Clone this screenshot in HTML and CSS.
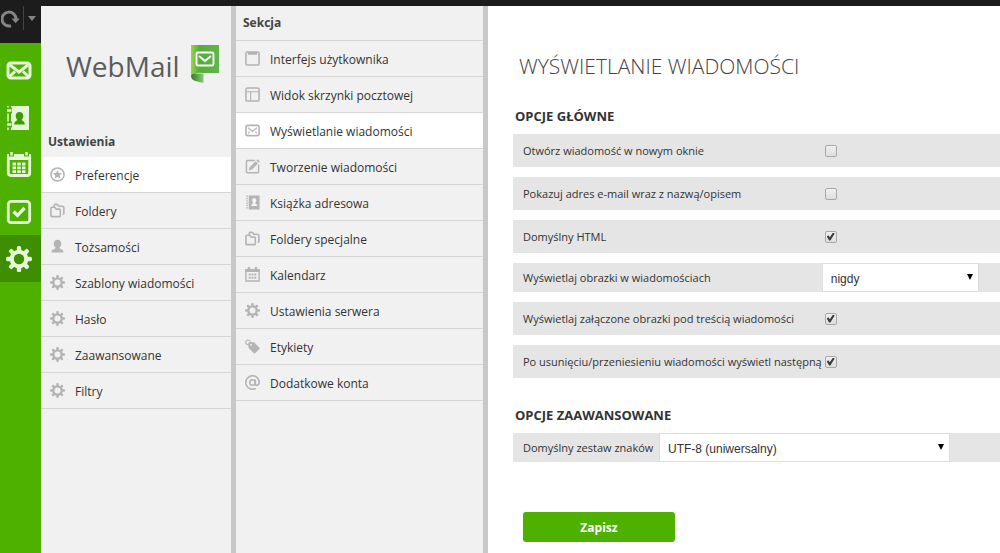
FILE: index.html
```html
<!DOCTYPE html>
<html lang="pl">
<head>
    <meta charset="UTF-8">
    <title>WebMail - Ustawienia</title>
    <link rel="stylesheet" href="styles.css">
</head>
<body>

    <!-- Ikony -->
    <svg class="sprite" aria-hidden="true">
        <symbol id="i-gear" viewBox="0 0 24 24">
            <g fill="currentColor">
                <rect id="tooth" x="10" y="0" width="4" height="24" rx="1.5"/>
                <use href="#tooth" transform="rotate(45 12 12)"/>
                <use href="#tooth" transform="rotate(90 12 12)"/>
                <use href="#tooth" transform="rotate(135 12 12)"/>
                <circle cx="12" cy="12" r="8.6"/>
            </g>
            <circle class="hole" cx="12" cy="12" r="4.8"/>
        </symbol>
        <symbol id="i-star" viewBox="0 0 16 16">
            <circle cx="8" cy="8" r="7" fill="none" stroke="currentColor" stroke-width="1.6"/>
            <path fill="currentColor" d="M8 3.200l1.500 3.200 3.300.3-2.500 2.300.8 3.300L8 10.600 4.900 12.300l.8-3.300L3.200 6.700l3.300-.3z"/>
        </symbol>
        <symbol id="i-folders" viewBox="0 0 16 16">
            <g fill="none" stroke="currentColor" stroke-width="1.700" stroke-linejoin="round">
                <path d="M1 5.500q0-1 1-1h3l1.500 2H10q1 0 1 1V13.500q0 1-1 1H2q-1 0-1-1z"/>
                <path d="M4.500 4.500V3q0-1.500 1-1.500h2.500l1.500 2H13q1.800 0 1.800 1.500v6q0 1.300-1.300 1.300"/>
            </g>
        </symbol>
        <symbol id="i-person" viewBox="0 0 16 16">
            <path fill="currentColor" d="M8 .8c2.600 0 4 1.800 4 4.200 0 1.800-.8 3.200-1.900 4.100 0 1.600.9 1.500 2.700 2.200 1.200.5 1.500 1.500 1.500 3.200H1.700c0-1.700.3-2.700 1.500-3.200 1.800-.7 2.700-.6 2.700-2.200C4.800 8.200 4 6.800 4 5 4 2.600 5.400.8 8 .8z"/>
        </symbol>
        <symbol id="i-window" viewBox="0 0 16 16">
            <rect x="1" y="1" width="14" height="14" rx="1.500" fill="none" stroke="currentColor" stroke-width="1.700"/>
            <path fill="currentColor" d="M3 1h10v3H3z"/>
        </symbol>
        <symbol id="i-layout" viewBox="0 0 16 16">
            <rect x="1" y="1" width="14" height="14" rx="1.500" fill="none" stroke="currentColor" stroke-width="1.700"/>
            <path d="M1 5h14M6 5v10" stroke="currentColor" stroke-width="1.200"/>
        </symbol>
        <symbol id="i-mail" viewBox="0 0 16 16">
            <rect x="1" y="2.500" width="14" height="11" rx="2" fill="none" stroke="currentColor" stroke-width="1.700"/>
            <path d="M3.300 5L8 9l4.700-4M3.300 11l1.700-1.700M12.700 11L11 9.300" fill="none" stroke="currentColor" stroke-width="1.300"/>
        </symbol>
        <symbol id="i-edit" viewBox="0 0 16 16">
            <path d="M10.500 1.700H2.500q-1 0-1 1v11q0 1 1 1h11q1 0 1-1V6" fill="none" stroke="currentColor" stroke-width="1.600"/>
            <path fill="currentColor" d="M4 12.200l.9-3.400 6.400-6.400 2.500 2.500-6.400 6.400zM12.100 1.600L13.500.2 16 2.700l-1.400 1.400z"/>
        </symbol>
        <symbol id="i-book" viewBox="0 0 16 16">
            <path fill="currentColor" d="M4 .5h11.500v15H4z"/>
            <path d="M2.200.5v15" stroke="currentColor" stroke-width="1.500" stroke-dasharray="1.500 1"/>
            <path class="hole" d="M9.800 3.200c1.500 0 2.300 1 2.300 2.500 0 1.200-.5 2-1.100 2.600 0 1.600 2 .8 2 3.500H6.600c0-2.700 2-1.900 2-3.500-.6-.6-1.100-1.400-1.100-2.600 0-1.500.8-2.500 2.300-2.500z"/>
        </symbol>
        <symbol id="i-calendar" viewBox="0 0 16 16">
            <path fill="none" stroke="currentColor" stroke-width="1.500" d="M1 3h14v12H1z"/>
            <path fill="currentColor" d="M.5 2h15v3.200H.5zM3 0h2.500v3H3zM10.500 0H13v3h-2.500z"/>
            <path d="M4 8h8M4 11.500h8" stroke="currentColor" stroke-width="2.200" stroke-dasharray="2 1"/>
        </symbol>
        <symbol id="i-tag" viewBox="0 0 16 16">
            <path fill="currentColor" d="M3.500 4.500l1-1.300 5.300.3 6.200 6.700-5.800 5.500-6.400-6.200z"/>
            <path d="M5.500 5.500C3.500 7 .5 6 .7 3.200 1 .7 4.500.2 6 2.500" fill="none" stroke="currentColor" stroke-width="1.200"/>
            <circle class="hole" cx="6.500" cy="6.200" r="1"/>
        </symbol>
        <symbol id="i-at" viewBox="0 0 16 16">
            <g fill="none" stroke="currentColor" stroke-width="1.700">
                <circle cx="8" cy="8" r="2.900"/>
                <path d="M11 5v4.500q0 1.700 1.700 1.500Q15.200 10.500 15.200 8A7.200 7.200 0 1 0 11.500 14.300"/>
            </g>
        </symbol>
    </svg>

    <div class="topbar"></div>

    <div class="app">
        <nav class="rail" aria-label="Moduły">
            <div class="refresh">
                <button type="button" aria-label="Odśwież">
                    <svg width="19" height="18" viewBox="0 0 19 18"><path d="M10 15.800A7 7 0 1 1 15 9" fill="none" stroke="currentColor" stroke-width="3"/><path d="M10.500 8.500h8.300l-4.200 4.800z" fill="currentColor"/></svg>
                </button>
                <button type="button" class="more" aria-label="Więcej"><span class="caret"></span></button>
            </div>
            <a class="rail-link" href="#poczta" aria-label="Poczta">
                <svg width="26" height="20" viewBox="0 0 26 20"><rect x="2" y="2" width="22" height="15" rx="3" fill="none" stroke="currentColor" stroke-width="3"/><path d="M4 4l9 7 9-7M3.500 15.500l5.500-5M22.500 15.500l-5.500-5" fill="none" stroke="currentColor" stroke-width="3"/></svg>
            </a>
            <a class="rail-link" href="#kontakty" aria-label="Kontakty">
                <svg width="24" height="26" viewBox="0 0 24 26"><path d="M5 1h18v24H5z" fill="currentColor"/><path d="M2 1v24" stroke="currentColor" stroke-width="1.500"/><path d="M1 5.500h5M1 19.500h5" stroke="#4eb100" stroke-width="6"/><path d="M1 5.500h4.500M1 19.500h4.500" stroke="currentColor" stroke-width="2.500"/><path d="M13.500 7c2.600 0 3.800 1.700 3.800 4 0 1.500-.6 2.800-1.500 3.600 0 2 3 1 3 4.900H8.200c0-3.900 3-2.900 3-4.900-.9-.8-1.500-2.100-1.500-3.600 0-2.300 1.200-4 3.800-4z" fill="#3f9a00"/></svg>
            </a>
            <a class="rail-link" href="#kalendarz" aria-label="Kalendarz">
                <svg width="26" height="26" viewBox="0 0 26 26"><path d="M2.300 6h21.400v15q0 2.500-2.500 2.500H4.800q-2.500 0-2.500-2.500z" fill="none" stroke="currentColor" stroke-width="2.800"/><path d="M1 2h24v6H1z" fill="currentColor"/><path d="M5.500 0v4.500M20.500 0v4.500" stroke="#4eb100" stroke-width="5"/><path d="M5.500 0v3.500M20.500 0v3.500" stroke="currentColor" stroke-width="2.500"/><path d="M6.500 12h13M6.500 15.800h13M6.500 19.600h13" stroke="currentColor" stroke-width="2.800" stroke-dasharray="3.500 1.250"/></svg>
            </a>
            <a class="rail-link" href="#zadania" aria-label="Zadania">
                <svg width="26" height="26" viewBox="0 0 26 26"><rect x="2.300" y="2.300" width="21.400" height="21.400" rx="3" fill="none" stroke="currentColor" stroke-width="2.800"/><path d="M7.500 12.500l4 4 7-7.500" fill="none" stroke="currentColor" stroke-width="3.300"/></svg>
            </a>
            <a class="rail-link active" href="#ustawienia" aria-label="Ustawienia">
                <svg width="26" height="26"><use href="#i-gear"/></svg>
            </a>
        </nav>

        <aside class="panel settings">
            <div class="logo">
                <span>WebMail</span>
                <svg width="30" height="40" viewBox="0 0 30 40">
                    <defs>
                        <linearGradient id="g1"><stop offset="0" stop-color="#9ad44c"/><stop offset=".3" stop-color="#55ac3b"/><stop offset="1" stop-color="#61b649"/></linearGradient>
                        <linearGradient id="g2"><stop offset="0" stop-color="#2b7a2c"/><stop offset="1" stop-color="#8dcb70"/></linearGradient>
                    </defs>
                    <path d="M1 1h28v28H12q-6-1-11 3z" fill="url(#g1)"/>
                    <path d="M1 32.500q0-3 5-3h7.500V39Q1 37 1 32.500z" fill="url(#g2)"/>
                    <rect x="6.500" y="8.500" width="17" height="13" rx="1.500" fill="none" stroke="#fff" stroke-width="1.800"/>
                    <path d="M9 12l6 5 6-5" fill="none" stroke="#fff" stroke-width="1.800"/>
                </svg>
            </div>
            <h2>Ustawienia</h2>
            <ul>
                <li class="active"><a href="#preferencje"><svg><use href="#i-star"/></svg>Preferencje</a></li>
                <li><a href="#foldery"><svg><use href="#i-folders"/></svg>Foldery</a></li>
                <li><a href="#tozsamosci"><svg><use href="#i-person"/></svg>Tożsamości</a></li>
                <li><a href="#szablony"><svg><use href="#i-gear"/></svg>Szablony wiadomości</a></li>
                <li><a href="#haslo"><svg><use href="#i-gear"/></svg>Hasło</a></li>
                <li><a href="#zaawansowane"><svg><use href="#i-gear"/></svg>Zaawansowane</a></li>
                <li><a href="#filtry"><svg><use href="#i-gear"/></svg>Filtry</a></li>
            </ul>
        </aside>

        <aside class="panel sections">
            <h2>Sekcja</h2>
            <ul>
                <li><a href="#interfejs"><svg><use href="#i-window"/></svg>Interfejs użytkownika</a></li>
                <li><a href="#widok"><svg><use href="#i-layout"/></svg>Widok skrzynki pocztowej</a></li>
                <li class="active"><a href="#wyswietlanie"><svg><use href="#i-mail"/></svg>Wyświetlanie wiadomości</a></li>
                <li><a href="#tworzenie"><svg><use href="#i-edit"/></svg>Tworzenie wiadomości</a></li>
                <li><a href="#ksiazka"><svg><use href="#i-book"/></svg>Książka adresowa</a></li>
                <li><a href="#specjalne"><svg><use href="#i-folders"/></svg>Foldery specjalne</a></li>
                <li><a href="#kal"><svg><use href="#i-calendar"/></svg>Kalendarz</a></li>
                <li><a href="#serwer"><svg><use href="#i-gear"/></svg>Ustawienia serwera</a></li>
                <li><a href="#etykiety"><svg><use href="#i-tag"/></svg>Etykiety</a></li>
                <li><a href="#konta"><svg><use href="#i-at"/></svg>Dodatkowe konta</a></li>
            </ul>
        </aside>

        <main>
            <h1>WYŚWIETLANIE WIADOMOŚCI</h1>
            <form>
                <h3>OPCJE GŁÓWNE</h3>
                <table>
                    <tr>
                        <td class="name"><label for="nowe-okno">Otwórz wiadomość w nowym oknie</label></td>
                        <td><input type="checkbox" id="nowe-okno"></td>
                    </tr>
                    <tr>
                        <td class="name"><label for="adres">Pokazuj adres e-mail wraz z nazwą/opisem</label></td>
                        <td><input type="checkbox" id="adres"></td>
                    </tr>
                    <tr>
                        <td class="name"><label for="html">Domyślny HTML</label></td>
                        <td><input type="checkbox" id="html" checked></td>
                    </tr>
                    <tr class="with-select">
                        <td class="name"><label for="obrazki">Wyświetlaj obrazki w wiadomościach</label></td>
                        <td>
                            <div class="select short">
                                <select id="obrazki">
                                    <option>nigdy</option>
                                    <option>zawsze</option>
                                </select>
                            </div>
                        </td>
                    </tr>
                    <tr>
                        <td class="name"><label for="zalaczone">Wyświetlaj załączone obrazki pod treścią wiadomości</label></td>
                        <td><input type="checkbox" id="zalaczone" checked></td>
                    </tr>
                    <tr>
                        <td class="name"><label for="nastepna">Po usunięciu/przeniesieniu wiadomości wyświetl następną</label></td>
                        <td><input type="checkbox" id="nastepna" checked></td>
                    </tr>
                </table>

                <h3>OPCJE ZAAWANSOWANE</h3>
                <table class="advanced">
                    <tr class="with-select">
                        <td class="name"><label for="znaki">Domyślny zestaw znaków</label></td>
                        <td>
                            <div class="select long">
                                <select id="znaki">
                                    <option>UTF-8 (uniwersalny)</option>
                                    <option>ISO-8859-2</option>
                                </select>
                            </div>
                        </td>
                    </tr>
                </table>

                <button type="submit" class="save">Zapisz</button>
            </form>
        </main>
    </div>

</body>
</html>
```
FILE: styles.css
```css
* {
    box-sizing: border-box;
}

body {
    margin: 0;
    min-height: 100vh;
    display: flex;
    flex-direction: column;
    font-family: "Open Sans", sans-serif;
    font-size: 12px;
    color: #333;
    background: #fff;
}

h1, h2, h3, ul {
    margin: 0;
    padding: 0;
}

button {
    font-family: inherit;
    border: 0;
    cursor: pointer;
}

.sprite {
    position: absolute;
    width: 0;
    height: 0;
}

.topbar {
    height: 6px;
    background: #1c1c1c;
}

.app {
    flex: 1;
    display: flex;
}

/* pasek modułów */
.rail {
    width: 41px;
    flex: none;
    background: #4eb100;
}

.refresh {
    display: flex;
    align-items: flex-start;
    height: 37px;
    margin-bottom: 4px;
    background: #1c1c1c;
}

.refresh button {
    display: flex;
    padding: 0;
    color: #858585;
    background: none;
}

.refresh .more {
    height: 24px;
    margin-left: 3px;
    padding-left: 4px;
    align-items: center;
    border-left: 1px solid #444;
}

.caret {
    border: 4px solid transparent;
    border-top: 5px solid #858585;
    border-bottom: 0;
}

.refresh svg {
    margin: 4px 0 0 1px;
}

.rail-link {
    display: flex;
    align-items: center;
    height: 47px;
    padding-left: 6px;
    color: #e6f7d8;
}

.rail-link.active {
    background: #3e8e02;
    --hole: #3e8e02;
}

/* panele z listami */
.panel {
    flex: none;
    background: #f1f1f1;
    border-right: 5px solid #c8c8c8;
}

.settings {
    width: 195px;
}

.sections {
    width: 252px;
}

.logo {
    display: flex;
    gap: 10px;
    height: 120px;
    padding: 38px 0 0 25px;
    font-size: 28px;
    line-height: 44px;
    color: #5c5c5c;
}

.panel h2 {
    padding-left: 7px;
    font-size: 12px;
    line-height: 34px;
    color: #444;
}

.settings h2 {
    line-height: 31px;
}

.sections h2 {
    border-bottom: 1px solid #d5d5d5;
}

.panel ul {
    list-style: none;
}

.panel li {
    height: 36px;
    border-bottom: 1px solid #d5d5d5;
}

.panel li.active {
    background: #fff;
}

.panel a {
    display: flex;
    align-items: center;
    gap: 10px;
    padding-left: 9px;
    line-height: 38px;
    color: #333;
    text-decoration: none;
}

.panel li svg {
    width: 15px;
    height: 15px;
    margin-bottom: 4px;
    color: #b4b4b4;
    --hole: #f1f1f1;
}

.hole {
    fill: var(--hole);
}

/* formularz */
main {
    flex: 1;
    padding: 43px 0 10px 25px;
}

h1 {
    padding-left: 6px;
    font-size: 21px;
    font-weight: 300;
    line-height: 34px;
    color: #444;
}

h3 {
    padding-left: 2px;
    font-size: 13px;
    line-height: 20px;
    color: #333;
}

form h3:first-child {
    margin-top: 23px;
}

table {
    width: 100%;
    margin: -2px 0 17px;
    border-collapse: separate;
    border-spacing: 0 10px;
    font-size: 11px;
}

tr {
    height: 33px;
}

.with-select {
    height: 29px;
}

td {
    padding: 0;
    background: #e5e5e5;
}

.name {
    width: 308px;
    padding-left: 10px;
    white-space: nowrap;
}

.advanced .name {
    width: 146px;
}

input[type="checkbox"] {
    appearance: none;
    display: block;
    width: 12px;
    height: 12px;
    margin: 0 0 0 3px;
    border: 1px solid #a8a8a8;
    border-radius: 2px;
    background: linear-gradient(#f0f0f0, #dedede);
}

input[type="checkbox"]:checked::before {
    content: "";
    display: block;
    width: 8px;
    height: 8px;
    margin: 1px;
    background: #3c3c3c;
    clip-path: polygon(0 50%, 20% 35%, 38% 58%, 78% 0, 100% 14%, 45% 100%, 30% 100%);
}

.select {
    position: relative;
}

.select::after {
    content: "";
    position: absolute;
    top: 11px;
    right: 6px;
    border: 3px solid transparent;
    border-top: 6px solid #000;
    border-bottom: 0;
    pointer-events: none;
}

.short {
    width: 157px;
}

.long {
    width: 291px;
}

select {
    appearance: none;
    display: block;
    width: 100%;
    height: 29px;
    padding: 2px 8px 0;
    font-family: "Liberation Sans", Arial, sans-serif;
    font-size: 12px;
    color: #333;
    border: 1px solid #ddd;
    border-radius: 0;
    background: #fff;
}

.save {
    display: block;
    width: 152px;
    height: 30px;
    margin: 40px 0 0 10px;
    font-size: 12px;
    font-weight: bold;
    color: #fff;
    border-radius: 3px;
    background: #4eb100;
}
```
